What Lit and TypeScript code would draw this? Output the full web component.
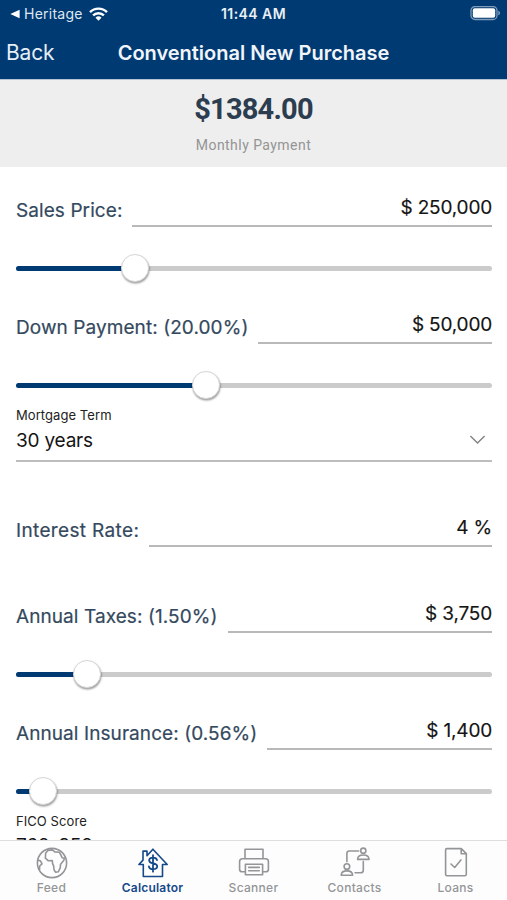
import { LitElement, html, css, svg, nothing } from "lit";
import { customElement, property } from "lit/decorators.js";
import { styleMap } from "lit/directives/style-map.js";

@customElement("calc-slider")
class CalcSlider extends LitElement {
  @property({ type: Number }) percent = 0;
  static styles = css`
    :host { display: block; height: 30px; }
    .rail { position: relative; height: 30px; display: flex; align-items: center; }
    .track { flex: 1; height: 5px; border-radius: 3px; background: #cbcbcb; overflow: hidden; }
    .fill { height: 5px; background: #003a73; }
    .knob {
      position: absolute; top: 1px; width: 28px; height: 28px; margin-left: -14px;
      box-sizing: border-box; border-radius: 50%; background: #fff;
      border: 1px solid #d6d6d6; box-shadow: 0.5px 1.5px 2px rgba(0, 0, 0, 0.38);
    }
  `;
  render() {
    const p = this.percent + "%";
    return html`<div class="rail">
      <div class="track"><div class="fill" style=${styleMap({ width: p })}></div></div>
      <div class="knob" style=${styleMap({ left: p })}></div>
    </div>`;
  }
}

@customElement("calc-field")
class CalcField extends LitElement {
  @property() label = "";
  @property() value = "";
  static styles = css`
    :host { display: flex; height: 36px; gap: 10px; letter-spacing: 0.08px; }
    .label { font-size: 19px; line-height: 24px; padding-top: 8px; color: #34495e; white-space: nowrap; -webkit-text-stroke: 0.2px #34495e; }
    .value {
      flex: 1; box-sizing: border-box; border-bottom: 2px solid #b9b9b9; text-align: right;
      font-size: 19px; line-height: 24px; padding-top: 5px; color: #141414; white-space: nowrap;
      letter-spacing: -0.18px; -webkit-text-stroke: 0.15px #141414;
    }
  `;
  render() {
    return html`<div class="label">${this.label}</div><div class="value">${this.value}</div>`;
  }
}

const icons: Record<string, unknown> = {
  Feed: svg`<circle cx="17" cy="17" r="14.6"/>
    <path d="M10.6 7.2 12.8 4.4l4.6-.5 2.4 2 4.6.4 1.4 2.5 1.3 2.9 2.3.4-.7 2.5-3.1 3.6-.4 3.6-1.9 4-2.6.5-1.6-2.3-.5-4.1-1-2.2-.3-3.2-4.2.2-2.7-2.5zM2.7 13.9l2.9 1.2 1.4 2.7-2.3 2.2-.2 3.6"/>`,
  Calculator: svg`<path d="M2.9 18.5 7 14.1V5.1h4v4.7l5.9-6.6 14.3 15.3h-4.7v12H7.3v-12z"/>
    <path d="M21 14.1c-.3-1.5-1.9-2.4-4-2.4-2.2 0-3.8 1.1-3.8 2.8 0 4.2 8 1.7 8 5.8 0 1.8-1.7 2.9-4 2.9-2.4 0-4.1-1.1-4.3-2.9M17 9.2v16.5" stroke-width="1.8"/>`,
  Scanner: svg`<path d="M8 12.7V3.2h18v9.5M8.4 25.8H5.2a2.6 2.6 0 0 1-2.6-2.6v-7.7a2.8 2.8 0 0 1 2.8-2.8h23.2a2.8 2.8 0 0 1 2.8 2.8v7.7a2.6 2.6 0 0 1-2.6 2.6h-3.2M8.4 18.2h17.2v10.5H8.4zM11.7 21.4h10.6M11.7 24.8h10.6"/>`,
  Contacts: svg`<circle cx="8.9" cy="20.6" r="2.8"/><circle cx="25.3" cy="4.7" r="2.6"/>
    <path d="M3.2 29.3c0-3 2.3-4.4 5.7-4.4s5.7 1.4 5.7 4.4zM19.6 13.4c0-3 2.2-4.4 5.7-4.4s5.7 1.4 5.7 4.4zM8.9 15.8V7.2A2.2 2.2 0 0 1 11.1 5h9.6M25.3 15.6v8.6a2.6 2.6 0 0 1-2.6 2.6h-5.6"/>`,
  Loans: svg`<path d="M8 2.6h14.3l5 5v20.7a1.4 1.4 0 0 1-1.4 1.4H8a1.4 1.4 0 0 1-1.4-1.4V4A1.4 1.4 0 0 1 8 2.6zM22.2 2.8v5h5M12 18l3.7 3.5 6.2-7.6"/>`,
};

@customElement("app-root")
class AppRoot extends LitElement {
  static styles = css`
    :host {
      display: flex; flex-direction: column; width: 100%; height: 900px; overflow: hidden;
      background: #fff; font-family: Inter, "Liberation Sans", sans-serif;
    }
    .header { flex: none; height: 80px; background: #003a73; color: #fff; border-bottom: 1px solid #b4c4d4; box-sizing: border-box; }
    .status { display: grid; grid-template-columns: 1fr auto 1fr; align-items: center; height: 27px; padding: 0 6px; }
    .carrier { display: flex; align-items: center; font-size: 14px; letter-spacing: 0.25px; color: #dfe8f1; padding-left: 4px; }
    .carrier .caret { margin-right: 4px; }
    .carrier .wifi { margin-left: 6px; }
    .time { font-size: 14px; font-weight: 600; letter-spacing: 0.45px; color: #e9eff5; }
    .battery { justify-self: end; display: block; }
    .nav { display: grid; grid-template-columns: 1fr auto 1fr; align-items: center; height: 51px; padding: 0 6px; }
    .back { font-size: 21px; letter-spacing: -0.2px; color: #e6eef6; }
    .title { font-size: 20px; font-weight: 600; letter-spacing: -0.02px; color: #f1f5f9; }
    .summary { flex: none; height: 87px; background: #eee; text-align: center; }
    .amount { font-family: Roboto, sans-serif; font-weight: 700; font-size: 29px; line-height: 36px; padding-top: 11px; color: #2b3d4f; letter-spacing: -0.8px; }
    .caption { font-family: Roboto, sans-serif; font-size: 14px; line-height: 20px; padding-top: 8px; color: #949494; letter-spacing: 0.45px; }
    .form { flex: 1; min-height: 0; overflow: hidden; padding: 24px 15px 0 16px; }
    .form calc-slider { margin-top: 26px; }
    .form .next { margin-top: 25px; }
    .small { font-size: 13px; line-height: 18px; margin-top: 6px; color: #222; letter-spacing: 0.07px; }
    .select {
      display: flex; justify-content: space-between; align-items: center; height: 38px; box-sizing: border-box;
      padding: 0 6px 3px 0; border-bottom: 2px solid #bdbdbd; font-size: 19px; letter-spacing: -0.2px; color: #141414;
    }
    .chevron { margin-bottom: 2px; }
    .form .rate { margin-top: 49px; letter-spacing: 0.35px; }
    .form .taxes { margin-top: 50px; }
    .score { font-size: 19px; line-height: 24px; margin-top: 4px; letter-spacing: -0.2px; color: #141414; }
    .tabs { flex: none; display: grid; grid-template-columns: repeat(5, 101px); justify-content: center; height: 60px; box-sizing: border-box; border-top: 1px solid #dedede; background: #fdfdfd; }
    .tab { display: flex; flex-direction: column; align-items: center; padding-top: 5px; color: #939598; font-size: 12px; font-weight: 500; line-height: 16px; letter-spacing: 0.3px; }
    .tab.active { color: #15498a; font-weight: 600; letter-spacing: 0.2px; }
    .icon { width: 34px; height: 34px; fill: none; stroke: currentColor; stroke-width: 1.6; stroke-linejoin: round; stroke-linecap: round; }
  `;
  render() {
    return html`
      <div class="header">
        <div class="status">
          <div class="carrier">
            <svg class="caret" width="10" height="10" viewBox="0 0 10 10"><path d="M.3 5 9.6.8v8.4z" fill="#fff"/></svg>
            <span>Heritage</span>
            <svg class="wifi" width="19" height="14" viewBox="0 0 19 14" fill="none" stroke="#fff" stroke-width="2.4">
              <path d="M1 5.2a12 12 0 0 1 17 0M4.1 8.4a7.7 7.7 0 0 1 10.8 0"/>
              <path d="M9.5 13.8 6.5 10.7a4.3 4.3 0 0 1 6 0z" fill="#fff" stroke="none"/>
            </svg>
          </div>
          <div class="time">11:44 AM</div>
          <svg class="battery" width="31" height="15" viewBox="0 0.5 31 15">
            <rect x="1" y="1" width="26" height="13" rx="4" fill="none" stroke="#7f9cb9" stroke-width="1.3"/>
            <rect x="2.8" y="2.8" width="22.4" height="9.4" rx="2" fill="#fff"/>
            <path d="M28.3 5.2c2.3.6 2.3 4 0 4.6z" fill="#7f9cb9"/>
          </svg>
        </div>
        <div class="nav"><div class="back">Back</div><div class="title">Conventional New Purchase</div></div>
      </div>
      <div class="summary">
        <div class="amount">$1384.00</div>
        <div class="caption">Monthly Payment</div>
      </div>
      <div class="form">
        <calc-field label="Sales Price:" value="$ 250,000"></calc-field>
        <calc-slider percent="25"></calc-slider>
        <calc-field class="next" label="Down Payment: (20.00%)" value="$ 50,000"></calc-field>
        <calc-slider percent="40"></calc-slider>
        <div class="small">Mortgage Term</div>
        <div class="select">
          <span>30 years</span>
          <svg class="chevron" width="17" height="10" viewBox="0 0 17 10" fill="none" stroke="#858585" stroke-width="1.5"><path d="m1.4 1 7.1 7 7.1-7"/></svg>
        </div>
        <calc-field class="rate" label="Interest Rate:" value="4 %"></calc-field>
        <calc-field class="taxes" label="Annual Taxes: (1.50%)" value="$ 3,750"></calc-field>
        <calc-slider percent="15"></calc-slider>
        <calc-field class="next" label="Annual Insurance: (0.56%)" value="$ 1,400"></calc-field>
        <calc-slider percent="5.6"></calc-slider>
        <div class="small">FICO Score</div>
        <div class="score">760-850</div>
      </div>
      <div class="tabs">
        ${Object.keys(icons).map(
          (name) => html`<div class="tab ${name === "Calculator" ? "active" : ""}">
            <svg class="icon" viewBox="0 0 34 34">${icons[name] ?? nothing}</svg><span>${name}</span>
          </div>`
        )}
      </div>
    `;
  }
}
